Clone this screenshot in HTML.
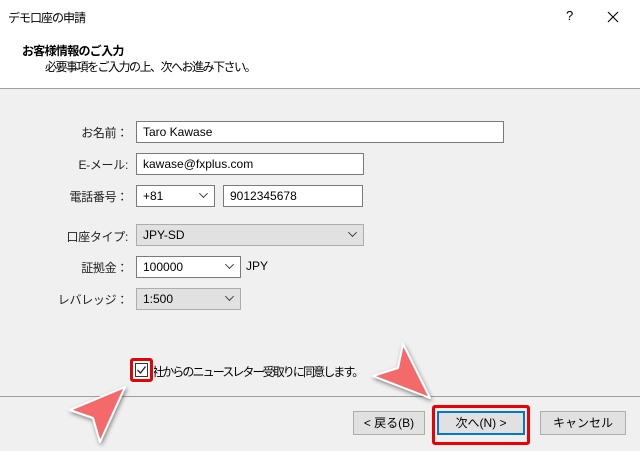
<!DOCTYPE html>
<html><head><meta charset="utf-8"><style>
*{box-sizing:border-box;margin:0;padding:0}
body{width:640px;height:451px;overflow:hidden;background:#f0f0f0;font-family:"Liberation Sans","Noto Sans CJK JP",sans-serif;font-size:12px;color:#000;position:relative}
.a{position:absolute}
.hdr{left:0;top:0;width:640px;height:89px;background:#fff;border-bottom:1px solid #a0a0a0}
.lbl{position:absolute;text-align:right;width:120px;left:8px;font-size:12px;color:#222;letter-spacing:-.3px}
.in{position:absolute;background:#fff;border:1px solid #7a7a7a;height:22px;padding-left:6px;line-height:20px;font-size:12px}
.g{background:#e1e1e1;border-color:#adadad}
.chev{position:absolute;right:7px;width:7px;height:7px;border-right:1px solid #333;border-bottom:1px solid #333;transform:rotate(45deg) scale(.9);top:4px}
.btn{position:absolute;background:#e1e1e1;border:1px solid #adadad;height:24px;line-height:22px;text-align:center;font-size:12px}
</style></head><body>
<div class="a" style="left:0;top:0;width:640px;height:1px;background:#333"></div>
<div class="a hdr"></div>
<div class="a" style="left:8px;top:9px;font-size:12px;letter-spacing:-1px">デモ口座の申請</div>
<div class="a" style="left:566px;top:8px;font-size:13px">?</div>
<svg class="a" style="left:607px;top:11px" width="12" height="12"><path d="M1 1L11 11M11 1L1 11" stroke="#000" stroke-width="1.1"/></svg>
<div class="a" style="left:22px;top:42px;font-weight:bold;letter-spacing:-.7px">お客様情報のご入力</div>
<div class="a" style="left:45px;top:58px;letter-spacing:-1.5px">必要事項をご入力の上、次へお進み下さい。</div>

<div class="lbl" style="top:124px">お名前：</div>
<div class="in" style="left:136px;top:121px;width:368px">Taro Kawase</div>
<div class="lbl" style="top:156px">E-メール:</div>
<div class="in" style="left:136px;top:153px;width:228px">kawase@fxplus.com</div>
<div class="lbl" style="top:188px">電話番号：</div>
<div class="in" style="left:136px;top:185px;width:79px">+81<span class="chev"></span></div>
<div class="in" style="left:223px;top:185px;width:140px">9012345678</div>
<div class="lbl" style="top:228px">口座タイプ:</div>
<div class="in g" style="left:136px;top:224px;width:228px">JPY-SD<span class="chev"></span></div>
<div class="lbl" style="top:259px">証拠金：</div>
<div class="in" style="left:136px;top:256px;width:105px">100000<span class="chev"></span></div>
<div class="a" style="left:246px;top:259px">JPY</div>
<div class="lbl" style="top:291px">レバレッジ：</div>
<div class="in g" style="left:136px;top:288px;width:105px">1:500<span class="chev"></span></div>

<div class="a" style="left:142px;top:363px;letter-spacing:-1.9px">貴社からのニュースレター受取りに同意します。</div>
<div class="a" style="left:130px;top:358px;width:23px;height:24px;border:3px solid #e00;border-radius:3px;background:#fff;box-shadow:0 0 0 1px #fff"></div>
<div class="a" style="left:135px;top:363px;width:13px;height:14px;border:1px solid #333;background:#fff"></div>
<svg class="a" style="left:135px;top:363px" width="13" height="14"><path d="M2.5 7l3 3 5-6.5" fill="none" stroke="#222" stroke-width="1.3"/></svg>

<div class="a" style="left:0;top:396px;width:640px;height:1px;background:#a0a0a0"></div>
<div class="btn" style="left:353px;top:411px;width:72px">&lt; 戻る(B)</div>
<div class="a" style="left:432px;top:405px;width:98px;height:40px;border:3px solid #e00;border-radius:3px"></div>
<div class="btn" style="left:437px;top:411px;width:88px;border:2px solid #0078d7;line-height:20px">次へ(N) &gt;</div>
<div class="btn" style="left:540px;top:411px;width:86px">キャンセル</div>

<svg class="a" style="left:0;top:0" width="640" height="451">
<defs><filter id="s" x="-20%" y="-20%" width="140%" height="140%"><feDropShadow dx="1" dy="2" stdDeviation="2" flood-opacity=".45"/></filter></defs>
<polygon points="125,387 70,410 93,418 100,442" fill="#f46a6a" stroke="#fff" stroke-width="2" stroke-linejoin="round" filter="url(#s)"/>
<polygon points="430,398 403,344 398,368 373,376" fill="#f46a6a" stroke="#fff" stroke-width="2" stroke-linejoin="round" filter="url(#s)"/>
</svg>
</body></html>
